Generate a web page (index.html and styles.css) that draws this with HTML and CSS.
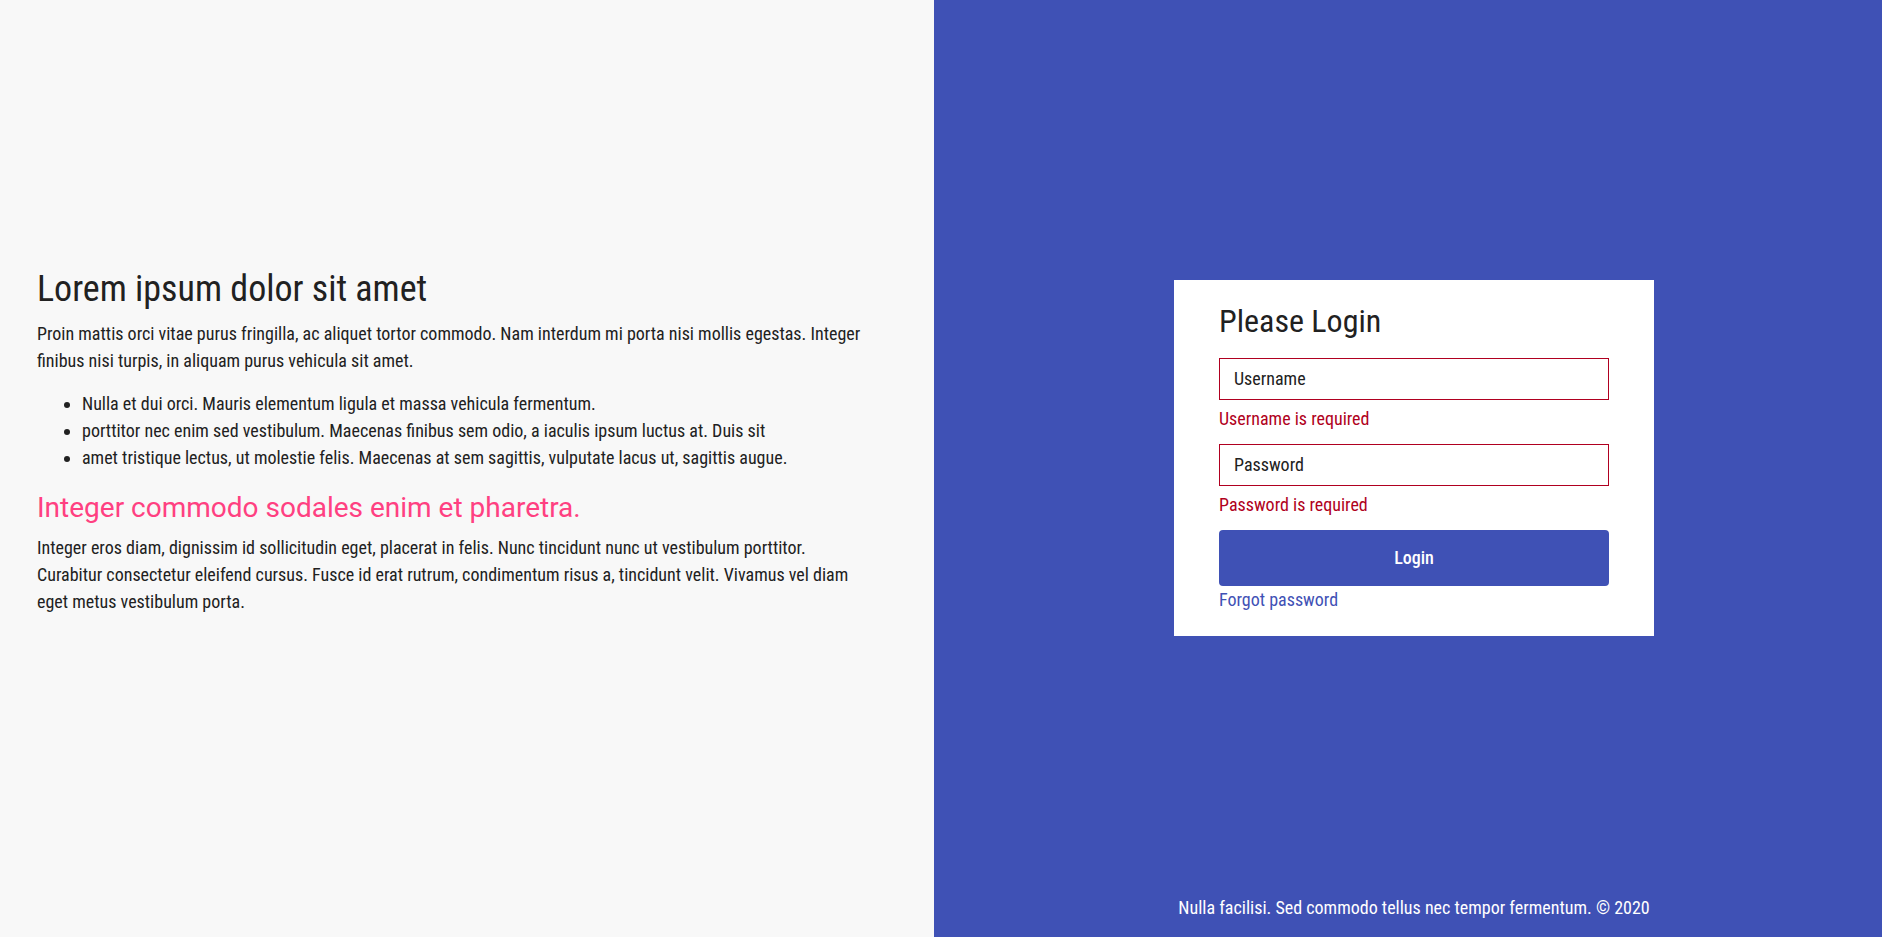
FILE: index.html
```html
<!DOCTYPE html>
<html lang="en">
<head>
<meta charset="utf-8">
<title>Login</title>
<link rel="stylesheet" href="styles.css">
</head>
<body>
<div class="page">
  <section class="intro">
    <div class="intro-content">
      <h1 class="intro-title">Lorem ipsum dolor sit amet</h1>
      <p class="intro-text">Proin mattis orci vitae purus fringilla, ac aliquet tortor commodo. Nam interdum mi porta nisi mollis egestas. Integer finibus nisi turpis, in aliquam purus vehicula sit amet.</p>
      <ul class="intro-list">
        <li>Nulla et dui orci. Mauris elementum ligula et massa vehicula fermentum.</li>
        <li>porttitor nec enim sed vestibulum. Maecenas finibus sem odio, a iaculis ipsum luctus at. Duis sit</li>
        <li>amet tristique lectus, ut molestie felis. Maecenas at sem sagittis, vulputate lacus ut, sagittis augue.</li>
      </ul>
      <h2 class="intro-subtitle">Integer commodo sodales enim et pharetra.</h2>
      <p class="intro-text">Integer eros diam, dignissim id sollicitudin eget, placerat in felis. Nunc tincidunt nunc ut vestibulum porttitor. Curabitur consectetur eleifend cursus. Fusce id erat rutrum, condimentum risus a, tincidunt velit. Vivamus vel diam eget metus vestibulum porta.</p>
    </div>
  </section>
  <section class="auth">
    <div class="auth-main">
      <form class="login-card">
        <h2 class="login-title">Please Login</h2>
        <div class="field">
          <input class="field-input" type="text" placeholder="Username">
          <div class="field-error">Username is required</div>
        </div>
        <div class="field">
          <input class="field-input" type="password" placeholder="Password">
          <div class="field-error">Password is required</div>
        </div>
        <button class="login-button" type="button">Login</button>
        <a class="forgot-link" href="#">Forgot password</a>
      </form>
    </div>
    <footer class="auth-footer">Nulla facilisi. Sed commodo tellus nec tempor fermentum. © 2020</footer>
  </section>
</div>
</body>
</html>
```
FILE: styles.css
```css
html, body {
  margin: 0;
  padding: 0;
  height: 100%;
}

body {
  font-family: "Roboto Condensed", "Roboto", "Liberation Sans", sans-serif;
  font-stretch: condensed;
  color: #212121;
  font-size: 18px;
  line-height: 1.5;
}

.page {
  display: grid;
  grid-template-columns: 934px 1fr;
  height: 100vh;
}

.intro {
  background: #f8f8f8;
  display: flex;
  flex-direction: column;
  justify-content: center;
  padding: 0 37px 54px;
}

.intro-content {
  max-width: 830px;
}

.intro-title {
  font-size: 36px;
  font-weight: 400;
  line-height: 1.2;
  margin: 0 0 9px;
}

.intro-text {
  margin: 0 0 16px;
}

.intro-text:last-child {
  margin-bottom: 0;
}

.intro-list {
  margin: 0 0 20px;
  padding-left: 45px;
}

.intro-subtitle {
  font-family: "Roboto", "Liberation Sans", sans-serif;
  font-stretch: normal;
  font-size: 28px;
  font-weight: 400;
  line-height: 1.2;
  color: #ff4081;
  margin: 0 0 9px;
}

.auth {
  background: #3f51b5;
  display: flex;
  flex-direction: column;
  padding-left: 12px;
}

.auth-main {
  flex: 1;
  display: flex;
  align-items: center;
  justify-content: center;
}

.login-card {
  background: #ffffff;
  width: 480px;
  box-sizing: border-box;
  padding: 22px 45px 23px;
  margin-top: 20px;
  display: flex;
  flex-direction: column;
}

.login-title {
  font-size: 32px;
  font-weight: 400;
  line-height: 1.2;
  margin: 0 0 17px;
}

.field {
  display: flex;
  flex-direction: column;
  margin-bottom: 12px;
}

.field-input {
  height: 42px;
  box-sizing: border-box;
  border: 1px solid #b00020;
  border-radius: 0;
  padding: 0 14px;
  font-family: inherit;
  font-stretch: condensed;
  font-size: 18px;
  color: #212121;
  background: #ffffff;
  outline: none;
}

.field-input::placeholder {
  color: #212121;
  opacity: 1;
}

.field-error {
  margin-top: 5px;
  color: #b00020;
}

.login-button {
  height: 56px;
  border: none;
  border-radius: 4px;
  background: #3f51b5;
  color: #ffffff;
  font-family: inherit;
  font-stretch: condensed;
  font-size: 18px;
  font-weight: 500;
  cursor: pointer;
}

.forgot-link {
  color: #3f51b5;
  text-decoration: none;
  align-self: flex-start;
}

.auth-footer {
  color: #ffffff;
  text-align: center;
  font-size: 18px;
  line-height: 24px;
  padding-bottom: 17px;
}
```
